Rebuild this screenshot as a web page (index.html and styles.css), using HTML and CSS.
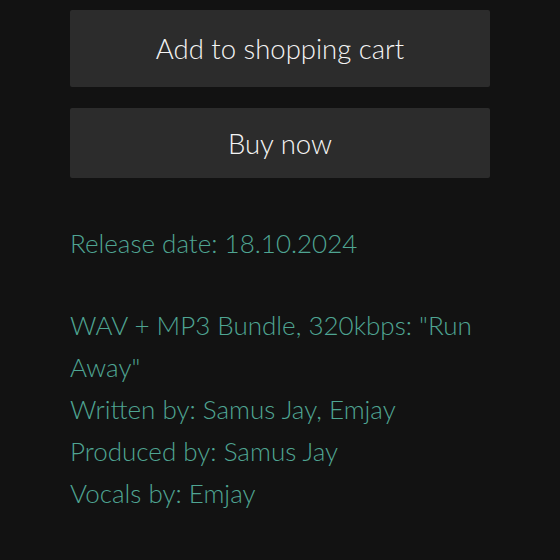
FILE: index.html
```html
<!DOCTYPE html>
<html lang="en">
<head>
    <meta charset="UTF-8">
    <title>Run Away - Samus Jay</title>
    <link rel="stylesheet" href="styles.css">
</head>
<body>

<div class="product">
    <button class="btn btn-cart">Add to shopping cart</button>
    <button class="btn btn-buy">Buy now</button>

    <div class="details">
        <p>Release date: 18.10.2024</p>
        <p>WAV + MP3 Bundle, 320kbps: "Run Away"<br>
        Written by: Samus Jay, Emjay<br>
        Produced by: Samus Jay<br>
        Vocals by: Emjay</p>
    </div>
</div>

</body>
</html>
```

FILE: styles.css
```css
body { margin: 0; background: #121212; font-family: Lato, "Open Sans", sans-serif; font-weight: 300; }
.product { padding: 10px 70px 0; }
.btn { display: block; width: 100%; border: none; border-radius: 2px; background: #2c2c2c; color: #f4f4f4; font-family: inherit; font-weight: 300; font-size: 27.5px; cursor: pointer; }
.btn-cart { height: 77px; }
.btn-buy { height: 70px; margin-top: 21px; }
.btn:hover { background: #363636; }
.details { margin-top: 44px; color: #4fa592; font-size: 26px; line-height: 42px; }
.details p { margin: 0 0 40px; }
```
